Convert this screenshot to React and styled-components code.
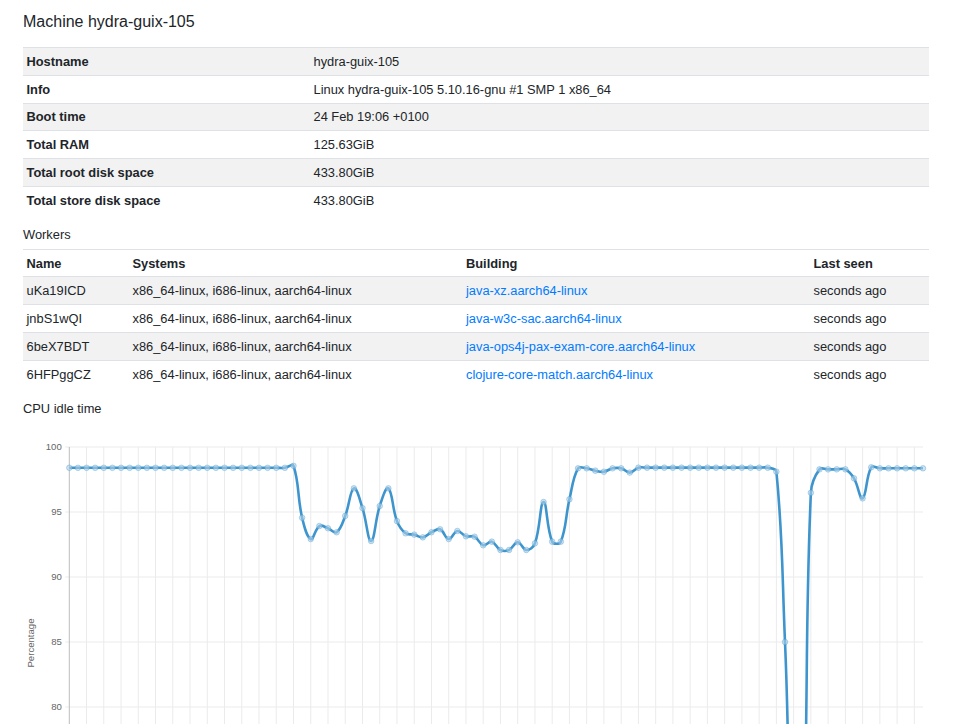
import React from 'react';
import styled, { createGlobalStyle } from 'styled-components';

const GlobalStyle = createGlobalStyle`
    body {
        margin: 0;
        background: #fff;
        color: #212529;
        font-family: "Liberation Sans", Arial, sans-serif;
        font-size: 12.85px;
        line-height: 18px;
    }
`;

const Page = styled.div`
    padding: 13px 38px 0 23px;
`;

const Title = styled.h4`
    margin: 0 0 16px;
    font-size: 16px;
    font-weight: 400;
    line-height: 18px;
`;

const Table = styled.table`
    width: 100%;
    border-collapse: collapse;
    table-layout: fixed;
`;

const Row = styled.tr`
    &:nth-child(odd) {
        background: ${props => (props.plain ? 'transparent' : '#f2f2f2')};
    }
`;

const Cell = styled.td`
    border-top: 1px solid #dee2e6;
    padding: 4.9px 3.5px 3.9px;
    text-align: left;
    vertical-align: top;
    white-space: nowrap;
    font-weight: ${props => (props.bold ? 700 : 400)};
    width: ${props => (props.width ? `${props.width}px` : 'auto')};
`;

const Caption = styled.div`
    margin: 12px 0 5px;
`;

const Link = styled.a`
    color: #007bff;
    text-decoration: none;
`;

const ChartSvg = styled.svg`
    display: block;
    width: 906px;
    height: 340px;
    font-family: "Liberation Sans", Arial, sans-serif;
`;

const info = [
    ['Hostname', 'hydra-guix-105'],
    ['Info', 'Linux hydra-guix-105 5.10.16-gnu #1 SMP 1 x86_64'],
    ['Boot time', '24 Feb 19:06 +0100'],
    ['Total RAM', '125.63GiB'],
    ['Total root disk space', '433.80GiB'],
    ['Total store disk space', '433.80GiB'],
];

const systems = 'x86_64-linux, i686-linux, aarch64-linux';

const workers = [
    ['uKa19ICD', 'java-xz.aarch64-linux'],
    ['jnbS1wQI', 'java-w3c-sac.aarch64-linux'],
    ['6beX7BDT', 'java-ops4j-pax-exam-core.aarch64-linux'],
    ['6HFPggCZ', 'clojure-core-match.aarch64-linux'],
];

const fill = (n, v) => Array(n).fill(v);

const idle = [
    ...fill(26, 98.4),
    98.55, 94.56, 92.92, 93.92, 93.75, 93.44, 94.7, 96.82, 95.3, 92.77,
    95.46, 96.82, 94.3, 93.36, 93.26, 93.05, 93.44, 93.67, 92.92, 93.54,
    93.13, 93.1, 92.44, 92.72, 92.08, 92.08, 92.67, 92.08, 92.59, 95.77,
    92.72, 92.72, 95.98, 98.36, 98.36, 98.18, 98.1, 98.36, 98.36, 98.03,
    ...fill(16, 98.41),
    98.1, 85.0, 68, 68, 96.48,
    ...fill(4, 98.28),
    97.59, 96.05, 98.44,
    ...fill(6, 98.36),
];

const TOP = 24;
const X0 = 46.3;
const DX = 8.623;
const px = i => X0 + i * DX;
const py = v => TOP + (100 - v) * 13;

// same spline as chart.js, tension 0.4
const splinePath = values => {
    const pts = values.map((v, i) => ({ x: px(i), y: py(v) }));
    const t = 0.4;
    const cps = pts.map((cur, i) => {
        const prev = pts[i - 1] || cur;
        const next = pts[i + 1] || cur;
        const d01 = Math.hypot(cur.x - prev.x, cur.y - prev.y);
        const d12 = Math.hypot(next.x - cur.x, next.y - cur.y);
        const sum = d01 + d12 || 1;
        const fa = (t * d01) / sum;
        const fb = (t * d12) / sum;
        return {
            inX: cur.x - fa * (next.x - prev.x),
            inY: cur.y - fa * (next.y - prev.y),
            outX: cur.x + fb * (next.x - prev.x),
            outY: cur.y + fb * (next.y - prev.y),
        };
    });
    let d = `M${pts[0].x},${pts[0].y}`;
    for (let i = 1; i < pts.length; i++) {
        d += ` C${cps[i - 1].outX},${cps[i - 1].outY} ${cps[i].inX},${cps[i].inY} ${pts[i].x},${pts[i].y}`;
    }
    return { d, pts };
};

const IdleChart = () => {
    const { d, pts } = splinePath(idle);
    const right = px(idle.length - 1);
    const ticks = [100, 95, 90, 85, 80, 75, 70];
    return (
        <ChartSvg viewBox="0 0 906 340">
            {ticks.map(v => (
                <line key={v} x1={X0 - 4} x2={right} y1={py(v)} y2={py(v)} stroke="#ebebeb" strokeWidth="1" />
            ))}
            {Array.from({ length: 50 }, (_, k) => (
                <line
                    key={k}
                    x1={px(k * 2)}
                    x2={px(k * 2)}
                    y1={TOP}
                    y2={340}
                    stroke={k === 0 ? '#bdbdbd' : '#ebebeb'}
                    strokeWidth="1"
                />
            ))}
            {ticks.map(v => (
                <text key={v} x={X0 - 7.5} y={py(v)} fontSize="9.6" fill="#666" textAnchor="end" dominantBaseline="middle">
                    {v}
                </text>
            ))}
            <text
                x={8}
                y={220}
                fontSize="9.6"
                fill="#666"
                textAnchor="middle"
                dominantBaseline="middle"
                transform="rotate(-90 8 220)"
            >
                Percentage
            </text>
            <path d={d} fill="none" stroke="#3e95cd" strokeWidth="2.6" strokeLinejoin="round" />
            {pts.map((p, i) => (
                <circle
                    key={i}
                    cx={p.x}
                    cy={p.y}
                    r="2.8"
                    fill="rgba(175, 208, 232, 0.6)"
                    stroke="rgba(62, 149, 205, 0.35)"
                    strokeWidth="1"
                />
            ))}
        </ChartSvg>
    );
};

const App = () => (
    <Page>
        <GlobalStyle />
        <Title>Machine hydra-guix-105</Title>
        <Table>
            <tbody>
                {info.map(([k, v]) => (
                    <Row key={k}>
                        <Cell bold width={280}>{k}</Cell>
                        <Cell>{v}</Cell>
                    </Row>
                ))}
            </tbody>
        </Table>
        <Caption>Workers</Caption>
        <Table>
            <thead>
                <Row plain>
                    <Cell as="th" bold width={99}>Name</Cell>
                    <Cell as="th" bold width={326.5}>Systems</Cell>
                    <Cell as="th" bold width={340.5}>Building</Cell>
                    <Cell as="th" bold>Last seen</Cell>
                </Row>
            </thead>
            <tbody>
                {workers.map(([name, build]) => (
                    <Row key={name}>
                        <Cell>{name}</Cell>
                        <Cell>{systems}</Cell>
                        <Cell>
                            <Link href="#">{build}</Link>
                        </Cell>
                        <Cell>seconds ago</Cell>
                    </Row>
                ))}
            </tbody>
        </Table>
        <Caption>CPU idle time</Caption>
        <IdleChart />
    </Page>
);

export default App;
